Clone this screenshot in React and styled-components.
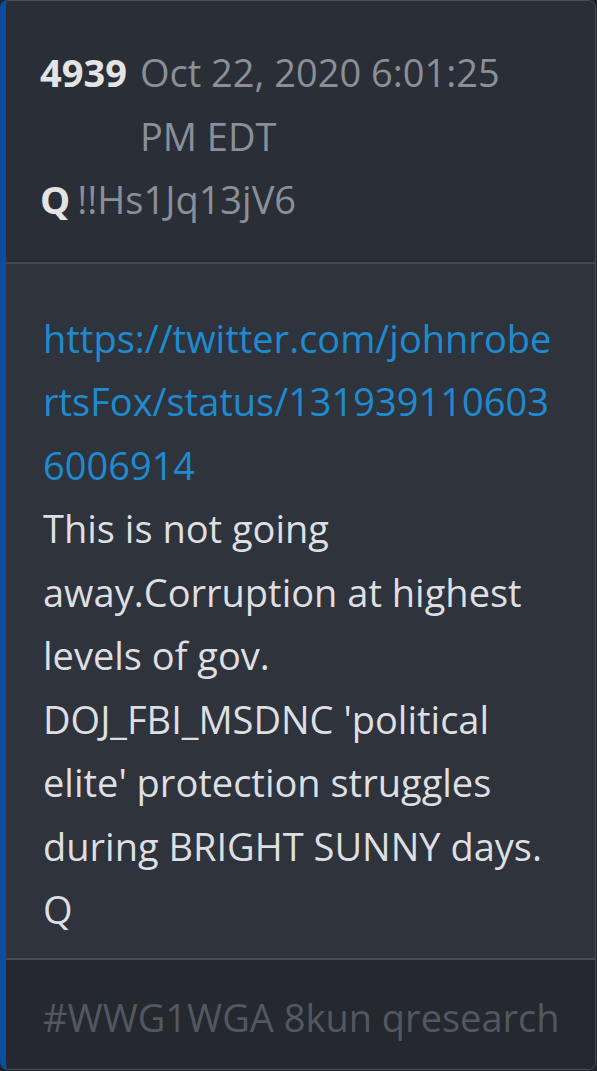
import React from 'react'
import styled, { createGlobalStyle } from 'styled-components'

const GlobalStyle = createGlobalStyle`
    body {
        margin: 0;
        background: #1f2228;
        font-family: "Open Sans", "Noto Sans", sans-serif;
    }
`

const Card = styled.div`
    width: 596px;
    box-sizing: border-box;
    border: 1px solid #4a4f58;
    border-left: 6px solid #0b4d9f;
    border-radius: 8px;
    overflow: hidden;
    font-size: 38px;
    line-height: 63.5px;
`

const Header = styled.div`
    background: #2a2e36;
    padding: 40px 40px 30px 34px;
    border-bottom: 2px solid #41464f;
`

const MetaRow = styled.div`
    display: flex;
    align-items: flex-start;
    gap: ${(p) => p.$gap || 13}px;
`

const Strong = styled.span`
    color: #e4e4e4;
    font-weight: 700;
    flex-shrink: 0;
`

const Muted = styled.span`
    color: #8a8f98;
`

const Body = styled.div`
    background: #2f333c;
    padding: 43px 40px 16px 37px;
    border-bottom: 2px solid #464b53;
    color: #dedfe2;
`

const Link = styled.a`
    display: block;
    color: #1e8bd0;
    text-decoration: none;
    word-break: break-all;
`

const Text = styled.p`
    margin: 0;
`

const Footer = styled.div`
    background: #25282f;
    padding: 26px 30px 20px 37px;
    color: #525861;
`

export default function App() {
    return (
        <>
            <GlobalStyle />
            <Card>
                <Header>
                    <MetaRow>
                        <Strong>4939</Strong>
                        <Muted>Oct 22, 2020 6:01:25 PM EDT</Muted>
                    </MetaRow>
                    <MetaRow $gap={7}>
                        <Strong>Q</Strong>
                        <Muted>!!Hs1Jq13jV6</Muted>
                    </MetaRow>
                </Header>
                <Body>
                    <Link href="#">https://twitter.com/johnrobertsFox/status/1319391106036006914</Link>
                    <Text>
                        This is not going away.Corruption at highest levels of gov.
                        <br />
                        DOJ_FBI_MSDNC 'political elite' protection struggles during BRIGHT SUNNY days.
                        <br />
                        Q
                    </Text>
                </Body>
                <Footer>#WWG1WGA 8kun qresearch</Footer>
            </Card>
        </>
    )
}
